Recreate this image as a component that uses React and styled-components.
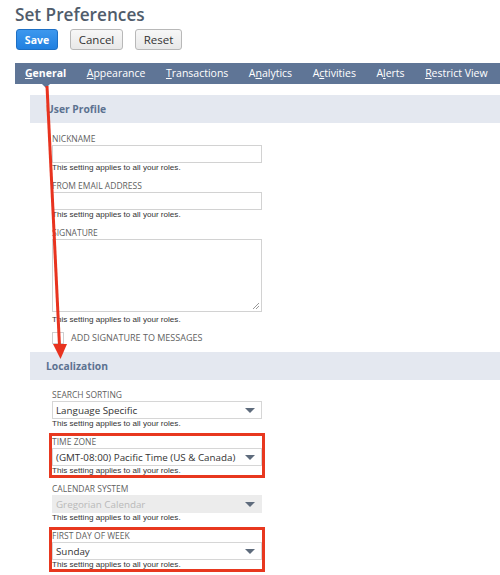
import styled, { createGlobalStyle } from 'styled-components';

const GlobalStyle = createGlobalStyle`
  html, body {
    margin: 0;
    padding: 0;
    background: #ffffff;
  }
  body {
    font-family: 'Open Sans', 'Liberation Sans', sans-serif;
    color: #333;
  }
`;

const Page = styled.div`
  position: relative;
  width: 500px;
  height: 575px;
  overflow: hidden;
  padding-left: 15px;
  box-sizing: border-box;
`;

const Title = styled.h1`
  margin: 0;
  padding-top: 2px;
  font-size: 17.2px;
  line-height: 25px;
  font-weight: 600;
  color: #505c6b;
`;

const ButtonRow = styled.div`
  display: flex;
  gap: 12px;
  margin-top: 2px;
  padding-left: 1px;
`;

const Button = styled.button`
  height: 21px;
  width: ${(p) => p.$width}px;
  padding: 0;
  border-radius: 3px;
  font-family: 'Open Sans', sans-serif;
  font-size: ${(p) => (p.$primary ? '10.5px' : '11.5px')};
  font-weight: ${(p) => (p.$primary ? 700 : 400)};
  color: ${(p) => (p.$primary ? '#fff' : '#333')};
  background: ${(p) =>
    p.$primary
      ? 'linear-gradient(#3d98ee, #2180e0)'
      : 'linear-gradient(#f7f7f7, #e8e8e8)'};
  border: 1px solid ${(p) => (p.$primary ? '#1d6fc4' : '#b8b8b8')};
  cursor: pointer;
`;

const TabBar = styled.div`
  display: flex;
  align-items: center;
  height: 21px;
  margin-top: 13px;
  padding-left: 10px;
  gap: 20.5px;
  background: #5f7596;
`;

const Tab = styled.div`
  position: relative;
  font-size: 10.5px;
  line-height: 21px;
  color: #fff;
  font-weight: ${(p) => (p.$active ? 700 : 400)};
  white-space: nowrap;

  u {
    text-decoration: underline;
  }

  ${(p) =>
    p.$active &&
    `
    &::after {
      content: '';
      position: absolute;
      left: 50%;
      bottom: -4px;
      margin-left: -4px;
      border-left: 4px solid transparent;
      border-right: 4px solid transparent;
      border-top: 4px solid #5f7596;
    }
  `}
`;

const Content = styled.div`
  margin-top: 11px;
  margin-left: 15px;
`;

const SectionHeader = styled.div`
  height: 28px;
  display: flex;
  align-items: center;
  padding-left: 16px;
  background: #e4e8f0;
  font-size: 10.3px;
  font-weight: 700;
  color: #5c7290;
`;

const SectionBody = styled.div`
  padding: ${(p) => p.$top}px 0 ${(p) => p.$bottom}px 22px;
  display: flex;
  flex-direction: column;
  gap: 8px;
`;

const Field = styled.div`
  width: 210px;
  display: flex;
  flex-direction: column;
  ${(p) => p.$highlight && 'outline: 3px solid #e8381f; outline-offset: 0px;'}
`;

const Label = styled.div`
  font-size: 8.5px;
  line-height: 12px;
  color: #5f5f5f;
  text-transform: uppercase;
`;

const TextInput = styled.div`
  height: 18px;
  box-sizing: border-box;
  border: 1px solid #d2d2d2;
  background: #fff;
`;

const TextArea = styled.div`
  position: relative;
  height: 73px;
  box-sizing: border-box;
  border: 1px solid #d2d2d2;
  background: #fff;
  margin-bottom: 3px;

  svg {
    position: absolute;
    right: 1px;
    bottom: 1px;
  }
`;

const Select = styled.div`
  height: 18px;
  box-sizing: border-box;
  border: 1px solid #d6d6d6;
  background: ${(p) => (p.$disabled ? '#ececec' : '#fff')};
  border-color: ${(p) => (p.$disabled ? '#ececec' : '#d6d6d6')};
  display: flex;
  align-items: center;
  justify-content: space-between;
  padding: 0 6px 0 3px;
  font-size: 9.8px;
  white-space: nowrap;
  color: ${(p) => (p.$disabled ? '#b9b9b9' : '#333')};
`;

const Caret = styled.span`
  width: 0;
  height: 0;
  border-left: 5px solid transparent;
  border-right: 5px solid transparent;
  border-top: 5px solid #5e6b7c;
`;

const Help = styled.div`
  font-family: 'Liberation Sans', Arial, sans-serif;
  font-size: 8.1px;
  line-height: 9px;
  color: #333;
`;

const CheckRow = styled.div`
  display: flex;
  align-items: center;
  gap: 7px;
  margin-top: -1px;
`;

const Box = styled.span`
  width: 12px;
  height: 12px;
  box-sizing: border-box;
  border: 1px solid #cfcfcf;
  background: #fff;
`;

const CheckLabel = styled.span`
  font-size: 9px;
  color: #5f5f5f;
`;

const Overlay = styled.svg`
  position: absolute;
  top: 0;
  left: 0;
  pointer-events: none;
`;

const HELP = 'This setting applies to all your roles.';

const SelectField = ({ label, value, disabled, highlight }) => (
  <Field $highlight={highlight}>
    <Label>{label}</Label>
    <Select $disabled={disabled}>
      <span>{value}</span>
      <Caret />
    </Select>
    <Help>{HELP}</Help>
  </Field>
);

const App = () => {
  const tabs = [
    ['General', 0, true],
    ['Appearance', 0],
    ['Transactions', 0],
    ['Analytics', 1],
    ['Activities', 1],
    ['Alerts', 1],
    ['Restrict View', 0],
  ];

  return (
    <>
      <GlobalStyle />
      <Page>
        <Title>Set Preferences</Title>
        <ButtonRow>
          <Button $primary $width={42}>Save</Button>
          <Button $width={53}>Cancel</Button>
          <Button $width={47}>Reset</Button>
        </ButtonRow>

        <TabBar>
          {tabs.map(([word, idx, active], i) => (
            <Tab key={i} $active={active}>
              {word.slice(0, idx)}
              <u>{word[idx]}</u>
              {word.slice(idx + 1)}
            </Tab>
          ))}
        </TabBar>

        <Content>
          <SectionHeader>User Profile</SectionHeader>
          <SectionBody $top={10} $bottom={8}>
            <Field>
              <Label>Nickname</Label>
              <TextInput />
              <Help>{HELP}</Help>
            </Field>
            <Field>
              <Label>From Email Address</Label>
              <TextInput />
              <Help>{HELP}</Help>
            </Field>
            <Field>
              <Label>Signature</Label>
              <TextArea>
                <svg width="9" height="9" viewBox="0 0 9 9">
                  <path d="M8 2 L2 8 M8 5 L5 8" stroke="#999" strokeWidth="1" />
                </svg>
              </TextArea>
              <Help>{HELP}</Help>
            </Field>
            <CheckRow>
              <Box />
              <CheckLabel>ADD SIGNATURE TO MESSAGES</CheckLabel>
            </CheckRow>
          </SectionBody>

          <SectionHeader>Localization</SectionHeader>
          <SectionBody $top={9} $bottom={10}>
            <SelectField label="Search Sorting" value="Language Specific" />
            <SelectField
              label="Time Zone"
              value="(GMT-08:00) Pacific Time (US & Canada)"
              highlight
            />
            <SelectField label="Calendar System" value="Gregorian Calendar" disabled />
            <SelectField label="First Day of Week" value="Sunday" highlight />
          </SectionBody>
        </Content>

        <Overlay width="500" height="575" viewBox="0 0 500 575">
          <line x1="47" y1="86" x2="59.5" y2="346" stroke="#e8331f" strokeWidth="3" />
          <polygon points="53,344 67,344 60.5,359" fill="#e8331f" />
        </Overlay>
      </Page>
    </>
  );
};

export default App;
